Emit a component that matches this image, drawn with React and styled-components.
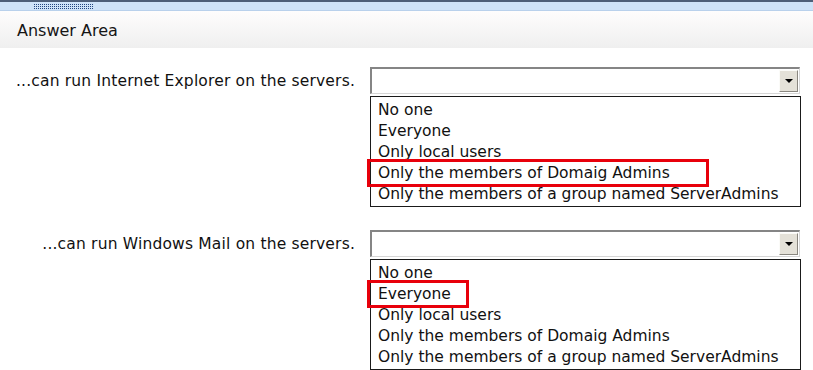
import React from "react";
import styled, { createGlobalStyle } from "styled-components";

const Global = createGlobalStyle`
  html, body { margin: 0; padding: 0; background: #ffffff; }
  body { font-family: "DejaVu Sans", Verdana, sans-serif; color: #111; }
`;

const Page = styled.div`
  width: 813px;
  height: 370px;
  overflow: hidden;
  background: #fff;
`;

const TopBar = styled.div`
  height: 8px;
  border-top: 2px solid #4e5f78;
  background: #cfe3f8;
  border-bottom: 1px solid #b9d1ec;
  display: flex;
  align-items: center;
  padding-left: 34px;
  box-sizing: content-box;
`;

const Grip = styled.div`
  width: 60px;
  height: 5px;
  background-color: #23467f;
  background-image:
    repeating-linear-gradient(90deg, transparent 0 1px, #cfe3f8 1px 2px),
    repeating-linear-gradient(0deg, transparent 0 1px, #cfe3f8 1px 2px);
`;

const Header = styled.div`
  height: 37px;
  box-sizing: border-box;
  padding: 2px 0 0 17px;
  display: flex;
  align-items: center;
  font-size: 16px;
  background: linear-gradient(#fefdfd, #efefef);
  color: #151515;
`;

const Content = styled.div`
  padding-top: 19px;
  display: flex;
  flex-direction: column;
  gap: 23px;
`;

const Row = styled.div`
  display: grid;
  grid-template-columns: 355px 431px;
  column-gap: 15px;
  align-items: start;
`;

const Label = styled.div`
  height: 27px;
  display: flex;
  align-items: center;
  justify-content: flex-end;
  font-size: 15.5px;
  letter-spacing: 0.18px;
  color: #111;
`;

const Field = styled.div`
  display: flex;
  flex-direction: column;
  gap: 2px;
`;

const SelectBox = styled.div`
  width: 430px;
  height: 27px;
  box-sizing: border-box;
  border-top: 2px solid #858585;
  border-left: 2px solid #858585;
  border-right: 1px solid #d6d6d6;
  border-bottom: 1px solid #d6d6d6;
  background: #fff;
  display: flex;
  justify-content: flex-end;
  align-items: stretch;
  padding: 1px 1px 1px 0;
`;

const ArrowButton = styled.div`
  width: 19px;
  box-sizing: border-box;
  background: #e4e1d8;
  border-top: 1px solid #fbfbf8;
  border-left: 1px solid #fbfbf8;
  border-right: 1px solid #8a8780;
  border-bottom: 1px solid #8a8780;
  display: flex;
  align-items: center;
  justify-content: center;
`;

const Triangle = styled.div`
  width: 0;
  height: 0;
  border-left: 4px solid transparent;
  border-right: 4px solid transparent;
  border-top: 4px solid #000;
`;

const List = styled.div`
  width: 431px;
  box-sizing: border-box;
  border: 1px solid #1a1a1a;
  padding: 3px 0 1px;
  background: #fff;
`;

const Item = styled.div`
  position: relative;
  height: 21px;
  line-height: 21px;
  padding-left: 7px;
  font-size: 15.5px;
  color: #111;
  white-space: nowrap;
`;

const Highlight = styled.span`
  position: absolute;
  left: -4px;
  top: -4px;
  height: 28px;
  width: ${(p) => p.$w}px;
  box-sizing: border-box;
  border: 3px solid #e8000b;
  pointer-events: none;
`;

const OPTIONS = [
  "No one",
  "Everyone",
  "Only local users",
  "Only the members of Domaig Admins",
  "Only the members of a group named ServerAdmins",
];

function Question({ label, selected, boxWidth }) {
  return (
    <Row>
      <Label>{label}</Label>
      <Field>
        <SelectBox>
          <ArrowButton>
            <Triangle />
          </ArrowButton>
        </SelectBox>
        <List>
          {OPTIONS.map((o, i) => (
            <Item key={o}>
              {o}
              {i === selected && <Highlight $w={boxWidth} />}
            </Item>
          ))}
        </List>
      </Field>
    </Row>
  );
}

export default function App() {
  return (
    <Page>
      <Global />
      <TopBar>
        <Grip />
      </TopBar>
      <Header>Answer Area</Header>
      <Content>
        <Question
          label="...can run Internet Explorer on the servers."
          selected={3}
          boxWidth={342}
        />
        <Question
          label="...can run Windows Mail on the servers."
          selected={1}
          boxWidth={102}
        />
      </Content>
    </Page>
  );
}
